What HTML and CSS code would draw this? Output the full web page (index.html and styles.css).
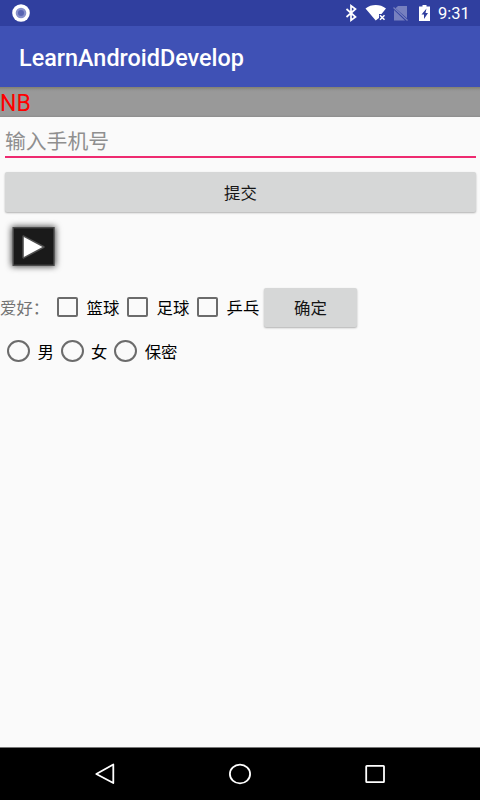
FILE: index.html
```html
<!DOCTYPE html>
<html lang="zh-CN">
<head>
<meta charset="utf-8">
<title>LearnAndroidDevelop</title>
<link rel="stylesheet" href="styles.css">
</head>
<body>
<div class="screen">
  <header class="status">
    <svg class="status-dot" width="18" height="18" viewBox="0 0 18 18"><circle cx="9" cy="9" r="8.8" fill="#fff"/><circle cx="9" cy="9" r="5.3" fill="#8790cb"/><circle cx="9" cy="9" r="3" fill="#5864b2"/></svg>
    <svg class="status-icons" width="90" height="26" viewBox="0 0 90 26">
      <path d="M1.500 9l9 8-4.500 3.300V5.700L10.500 9l-9 8" fill="none" stroke="#fff" stroke-width="1.700"/>
      <path d="M20.500 8.500C26.500 3.900 35 3.900 41 8.500L36.500 14h-2.500v4l-3.300 2.500z" fill="#fff"/>
      <path d="M35 15.200l4.500 4.500M39.500 15.200L35 19.700" stroke="#fff" stroke-width="1.500"/>
      <path d="M53 6h9v12.200L50.500 8.200zM49 10v10.500h11z" fill="#7780bf"/>
      <path d="M48.500 7.500l14 13" stroke="#7780bf" stroke-width="1.300"/>
      <path d="M74 6.500h3.500V5h4v1.500H85V21H74z" fill="#fff"/>
      <path d="M81.500 8.500L76.500 14.500h2.500v4.500L83 13h-2.500z" fill="#303f9f"/>
    </svg>
    <span class="clock">9:31</span>
  </header>
  <div class="appbar"><h1>LearnAndroidDevelop</h1></div>
  <main class="content">
    <div class="banner">NB</div>
    <div class="field">输入手机号</div>
    <div class="button submit">提交</div>
    <div class="play">
      <svg width="60" height="60" viewBox="0 0 60 60"><rect class="play-shadow" x="11.500" y="10.500" width="44" height="40" fill="#444"/><rect x="13.200" y="11.700" width="40.800" height="37.600" fill="#1a1a1a" stroke="#4b4b4b" stroke-width="1.400"/><path d="M23.500 20.500L43.500 31L23.500 41.500z" fill="#fff" stroke="#505050" stroke-width="2.400" stroke-linejoin="round"/><path d="M23.800 21L42.500 31L23.800 41z" fill="#fff"/></svg>
    </div>
    <div class="row hobbies">
      <span class="label">爱好：</span>
      <span class="check"><i class="box"></i><span class="caption">篮球</span></span>
      <span class="check"><i class="box"></i><span class="caption">足球</span></span>
      <span class="check"><i class="box"></i><span class="caption">乒乓</span></span>
      <div class="button confirm">确定</div>
    </div>
    <div class="row genders">
      <span class="radio"><i class="ring"></i><span class="caption">男</span></span>
      <span class="radio"><i class="ring"></i><span class="caption">女</span></span>
      <span class="radio"><i class="ring"></i><span class="caption">保密</span></span>
    </div>
  </main>
  <nav class="navbar">
    <svg width="24" height="24" viewBox="0 0 24 24"><path d="M18.300 2.500v18.500L1.300 12z"/></svg>
    <svg width="24" height="24" viewBox="0 0 24 24"><ellipse cx="12" cy="12" rx="10.100" ry="9.400"/></svg>
    <svg width="24" height="24" viewBox="0 0 24 24"><rect x="3.200" y="3.800" width="17.800" height="16.400" rx=".6"/></svg>
  </nav>
</div>
</body>
</html>
```
FILE: styles.css
```css
* { box-sizing: border-box; }
body { margin: 0; font-family: Roboto, "Noto Sans CJK SC", sans-serif; }
.screen { width: 480px; height: 800px; display: flex; flex-direction: column; background: #fafafa; overflow: hidden; }
.status { height: 26px; flex: none; display: flex; align-items: center; padding: 0 10px 0 12px; background: #303f9f; }
.status-icons { margin-left: auto; margin-right: 3px; }
.clock { color: #fff; font-size: 16.500px; line-height: 26px; width: 32px; padding-top: 2px; }
.appbar { height: 61px; flex: none; padding-left: 19px; background: #3f51b5; }
.appbar h1 { margin: 0; color: #fff; font-size: 23.400px; font-weight: 500; line-height: 65px; }
.content { flex: 1; display: flex; flex-direction: column; }
.banner { height: 30px; flex: none; background: linear-gradient(#83816f, #949494 3px, #999 5px, #999 28px, #8d8d8d); color: #f00; font-size: 23px; line-height: 33px; }
.field { height: 41px; flex: none; margin: 0 4px 0 5px; border-bottom: 2px solid #ee2a70; color: #8f8f8f; font-size: 20.800px; line-height: 50px; }
.button { display: flex; align-items: center; justify-content: center; padding-bottom: 1px; background: #d6d7d7; border-radius: 2px; box-shadow: 0 1px 2px rgba(0,0,0,.3); color: #151515; font-size: 16.400px; }
.submit { height: 40px; margin: 14px 4px 0 5px; }
.play { height: 75px; }
.play svg { display: block; margin-top: 4px; overflow: visible; }
.play-shadow { filter: blur(3px); }
.row { display: flex; align-items: center; font-size: 16.400px; color: #000; }
.hobbies { height: 40px; }
.label { width: 57px; color: #737373; white-space: nowrap; }
.check { display: flex; align-items: center; width: 70px; }
.box { width: 21px; height: 20px; margin-right: 8.500px; border: 2px solid #6b6b6b; border-radius: 2px; }
.caption { padding-bottom: 1px; }
.check:nth-of-type(4) { width: 67px; }
.confirm { width: 93px; height: 39px; }
.genders { height: 48px; padding-left: 7px; }
.radio { display: flex; align-items: center; width: 53.600px; white-space: nowrap; }
.ring { flex: none; width: 23px; height: 22px; margin-right: 7.500px; border: 2px solid #6b6b6b; border-radius: 50%; }
.navbar { height: 53px; flex: none; display: flex; justify-content: space-between; align-items: center; padding: 0 93px 0 95px; background: #000; border-top: 1px solid #777; }
.navbar svg { fill: none; stroke: #fff; stroke-width: 1.800; stroke-linejoin: round; }
.navbar svg:nth-child(2) { margin-right: 2px; }
```
